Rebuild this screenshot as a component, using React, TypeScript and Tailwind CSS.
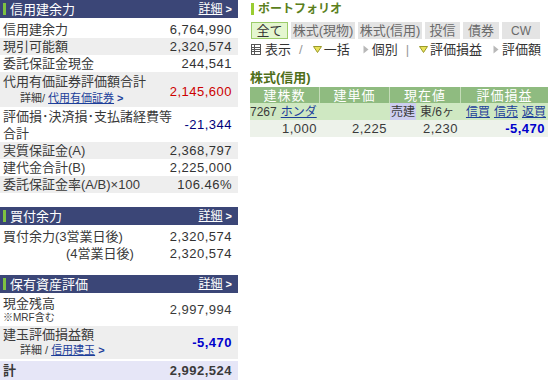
import React from "react";

function SectionHeader({ title }: { title: string }) {
  return (
    <div className="flex h-[18px] items-center justify-between bg-[#3b4677] pl-[3px] pr-[6px] text-white">
      <div className="flex items-center">
        <span className="mr-[4px] h-[12px] w-[3px] bg-[#7dc241]" />
        <span className="text-[13px] leading-none">{title}</span>
      </div>
      <div className="flex items-center text-[12px] leading-none">
        <span className="underline">詳細</span>
        <span className="ml-[3px] text-[11px] font-bold">&gt;</span>
      </div>
    </div>
  );
}

function Row({
  label,
  value,
  bg = "bg-white",
  valueClass = "text-[#333]",
}: {
  label: React.ReactNode;
  value: React.ReactNode;
  bg?: string;
  valueClass?: string;
}) {
  return (
    <div className={`flex h-[17px] items-center justify-between pl-[3px] pr-[6px] ${bg}`}>
      <span className="text-[13px] leading-none text-[#3a3a3a]">{label}</span>
      <span className={`text-[13px] tracking-[0.5px] leading-none ${valueClass}`}>{value}</span>
    </div>
  );
}

function DownTri() {
  return (
    <svg width="9" height="7" viewBox="0 0 9 7" className="mx-[2px]">
      <polygon points="0.5,0.5 8.5,0.5 4.5,6.5" fill="#e9e25a" stroke="#9a9a2a" strokeWidth="1" />
    </svg>
  );
}

function RightTri() {
  return (
    <svg width="6" height="9" viewBox="0 0 6 9" className="mx-[3px]">
      <polygon points="0.5,0.5 5.5,4.5 0.5,8.5" fill="#b8b8b8" />
    </svg>
  );
}

function ListIcon() {
  return (
    <svg width="10" height="11" viewBox="0 0 10 11">
      <rect x="0.5" y="0.5" width="9" height="10" fill="#fff" stroke="#555" />
      <line x1="1" y1="3.5" x2="9" y2="3.5" stroke="#555" />
      <line x1="1" y1="5.5" x2="9" y2="5.5" stroke="#555" />
      <line x1="1" y1="7.5" x2="9" y2="7.5" stroke="#555" />
      <line x1="3.5" y1="1" x2="3.5" y2="10" stroke="#555" />
    </svg>
  );
}

export default function App() {
  return (
    <div className="flex h-[384px] w-[550px] overflow-hidden bg-white font-[family-name:'Liberation_Sans','Noto_Sans_CJK_JP',sans-serif] text-[#3a3a3a]">
      {/* Left column */}
      <div className="w-[238px] shrink-0">
        <SectionHeader title="信用建余力" />
        <div className="pt-[3px]">
          <Row label="信用建余力" value="6,764,990" />
          <Row label="現引可能額" value="2,320,574" bg="bg-[#eeeeee]" />
          <Row label="委託保証金現金" value="244,541" />
          <div className="flex h-[35px] items-center justify-between bg-[#eeeeee] pl-[3px] pr-[6px]">
            <div className="flex flex-col">
              <span className="flex h-[17px] items-center text-[13px] leading-none">代用有価証券評価額合計</span>
              <span className="flex h-[17px] items-center pl-[17px] text-[11px] leading-none">
                詳細/<span className="ml-[3px] text-[#1d3f9a] underline">代用有価証券</span>
                <span className="ml-[3px] font-bold text-[#1d3f9a]">&gt;</span>
              </span>
            </div>
            <span className="pt-[4px] text-[13px] tracking-[0.5px] leading-none text-[#cc0000]">2,145,600</span>
          </div>
          <div className="flex h-[35px] items-center justify-between bg-white pl-[3px] pr-[6px]">
            <div className="flex flex-col">
              <span className="flex h-[17px] items-center text-[13px] leading-none">評価損･決済損･支払諸経費等</span>
              <span className="flex h-[17px] items-center text-[13px] leading-none">合計</span>
            </div>
            <span className="text-[13px] tracking-[0.5px] leading-none text-[#00007a]">-21,344</span>
          </div>
          <Row label="実質保証金(A)" value="2,368,797" bg="bg-[#eeeeee]" />
          <Row label="建代金合計(B)" value="2,225,000" />
          <Row label="委託保証金率(A/B)×100" value="106.46%" bg="bg-[#eeeeee]" />
        </div>

        <div className="mt-[14px]">
          <SectionHeader title="買付余力" />
        </div>
        <div className="pt-[3px]">
          <Row label="買付余力(3営業日後)" value="2,320,574" />
          <Row label={<span className="pl-[63px]">(4営業日後)</span>} value="2,320,574" />
        </div>

        <div className="mt-[13px]">
          <SectionHeader title="保有資産評価" />
        </div>
        <div className="flex h-[33px] items-center justify-between bg-white pl-[3px] pr-[6px]">
          <div className="flex flex-col">
            <span className="flex h-[16px] items-center text-[13px] leading-none">現金残高</span>
            <span className="flex h-[13px] items-center text-[10px] leading-none">※MRF含む</span>
          </div>
          <span className="text-[13px] tracking-[0.5px] leading-none">2,997,994</span>
        </div>
        <div className="flex h-[33px] items-center justify-between bg-[#eeeeee] pl-[3px] pr-[6px]">
          <div className="flex flex-col">
            <span className="flex h-[16px] items-center text-[13px] leading-none">建玉評価損益額</span>
            <span className="flex h-[16px] items-center pl-[17px] text-[11px] leading-none">
              詳細 /<span className="ml-[3px] text-[#1d3f9a] underline">信用建玉</span>
              <span className="ml-[3px] font-bold text-[#1d3f9a]">&gt;</span>
            </span>
          </div>
          <span className="text-[13px] tracking-[0.5px] font-bold leading-none text-[#0000cc]">-5,470</span>
        </div>
        <div className="mt-[2px] flex h-[19px] items-center justify-between bg-[#e6e6f7] pl-[3px] pr-[6px]">
          <span className="text-[13px] font-bold leading-none">計</span>
          <span className="text-[13px] tracking-[0.5px] font-bold leading-none">2,992,524</span>
        </div>
      </div>

      {/* Right column */}
      <div className="ml-[12px] w-[298px] shrink-0">
        <div className="flex h-[17px] items-center pl-[1px]">
          <span className="mr-[4px] h-[12px] w-[3px] bg-[#9acd32]" />
          <span className="text-[12px] font-bold leading-none text-[#5b7f1c]">ポートフォリオ</span>
        </div>
        <div className="mt-[5px] flex gap-[3px] pl-[1px] text-[13px] leading-none">
          <div className="flex h-[17px] w-[37px] items-center justify-center border border-[#9ccc6a] bg-[#e4f6cf] text-[#333]">全て</div>
          <div className="flex h-[17px] w-[64px] items-center justify-center bg-[#e4e4e4] text-[#6a6a6a]">株式(現物)</div>
          <div className="flex h-[17px] w-[64px] items-center justify-center bg-[#e4e4e4] text-[#6a6a6a]">株式(信用)</div>
          <div className="flex h-[17px] w-[35px] items-center justify-center bg-[#e4e4e4] text-[#6a6a6a]">投信</div>
          <div className="flex h-[17px] w-[36px] items-center justify-center bg-[#e4e4e4] text-[#6a6a6a]">債券</div>
          <div className="flex h-[17px] w-[38px] items-center justify-center bg-[#e4e4e4] text-[12px] text-[#6a6a6a]">CW</div>
        </div>
        <div className="mt-[3px] flex h-[14px] items-center pl-[1px] text-[13px] leading-none text-[#333]">
          <ListIcon />
          <span className="ml-[4px]">表示</span>
          <span className="mx-[8px] text-[#999]">/</span>
          <DownTri />
          <span>一括</span>
          <span className="ml-[10px]"><RightTri /></span>
          <span>個別</span>
          <span className="mx-[8px] text-[#999]">|</span>
          <DownTri />
          <span>評価損益</span>
          <span className="ml-[8px]"><RightTri /></span>
          <span>評価額</span>
        </div>
        <div className="mt-[13px] flex h-[16px] items-center">
          <span className="text-[13px] font-bold leading-none text-[#4f6f1a]">株式(信用)</span>
        </div>
        <div className="mt-[2px] text-[13px] leading-none">
          <div className="grid h-[16px] grid-cols-[70px_70px_71px_87px] bg-[#8fbb80] text-[13px] tracking-[1px] text-white">
            <div className="flex items-center justify-center border-r border-[#c4dcb8]">建株数</div>
            <div className="flex items-center justify-center border-r border-[#c4dcb8]">建単価</div>
            <div className="flex items-center justify-center border-r border-[#c4dcb8]">現在値</div>
            <div className="flex items-center justify-center">評価損益</div>
          </div>
          <div className="grid h-[17px] grid-cols-[70px_70px_71px_87px] bg-[#cfe8c2] text-[12px]">
            <div className="col-span-2 flex items-center">
              <span>7267</span>
              <span className="ml-[4px] text-[#1d3f9a] underline">ホンダ</span>
            </div>
            <div className="flex items-center">
              <span className="flex h-full items-center bg-[#cdcdf0] px-[1px]">売建</span>
              <span className="ml-[4px]">東/6ヶ</span>
            </div>
            <div className="flex items-center justify-end gap-[4px] pr-[2px] text-[#1d3f9a]">
              <span className="underline">信買</span>
              <span className="underline">信売</span>
              <span className="underline">返買</span>
            </div>
          </div>
          <div className="grid h-[17px] grid-cols-[70px_70px_71px_87px] bg-[#edf2ea] tracking-[0.5px]">
            <div className="flex items-center justify-end pr-[3px]">1,000</div>
            <div className="flex items-center justify-end pr-[3px]">2,225</div>
            <div className="flex items-center justify-end pr-[3px]">2,230</div>
            <div className="flex items-center justify-end pr-[3px] font-bold text-[#0000cc]">-5,470</div>
          </div>
        </div>
      </div>
    </div>
  );
}
